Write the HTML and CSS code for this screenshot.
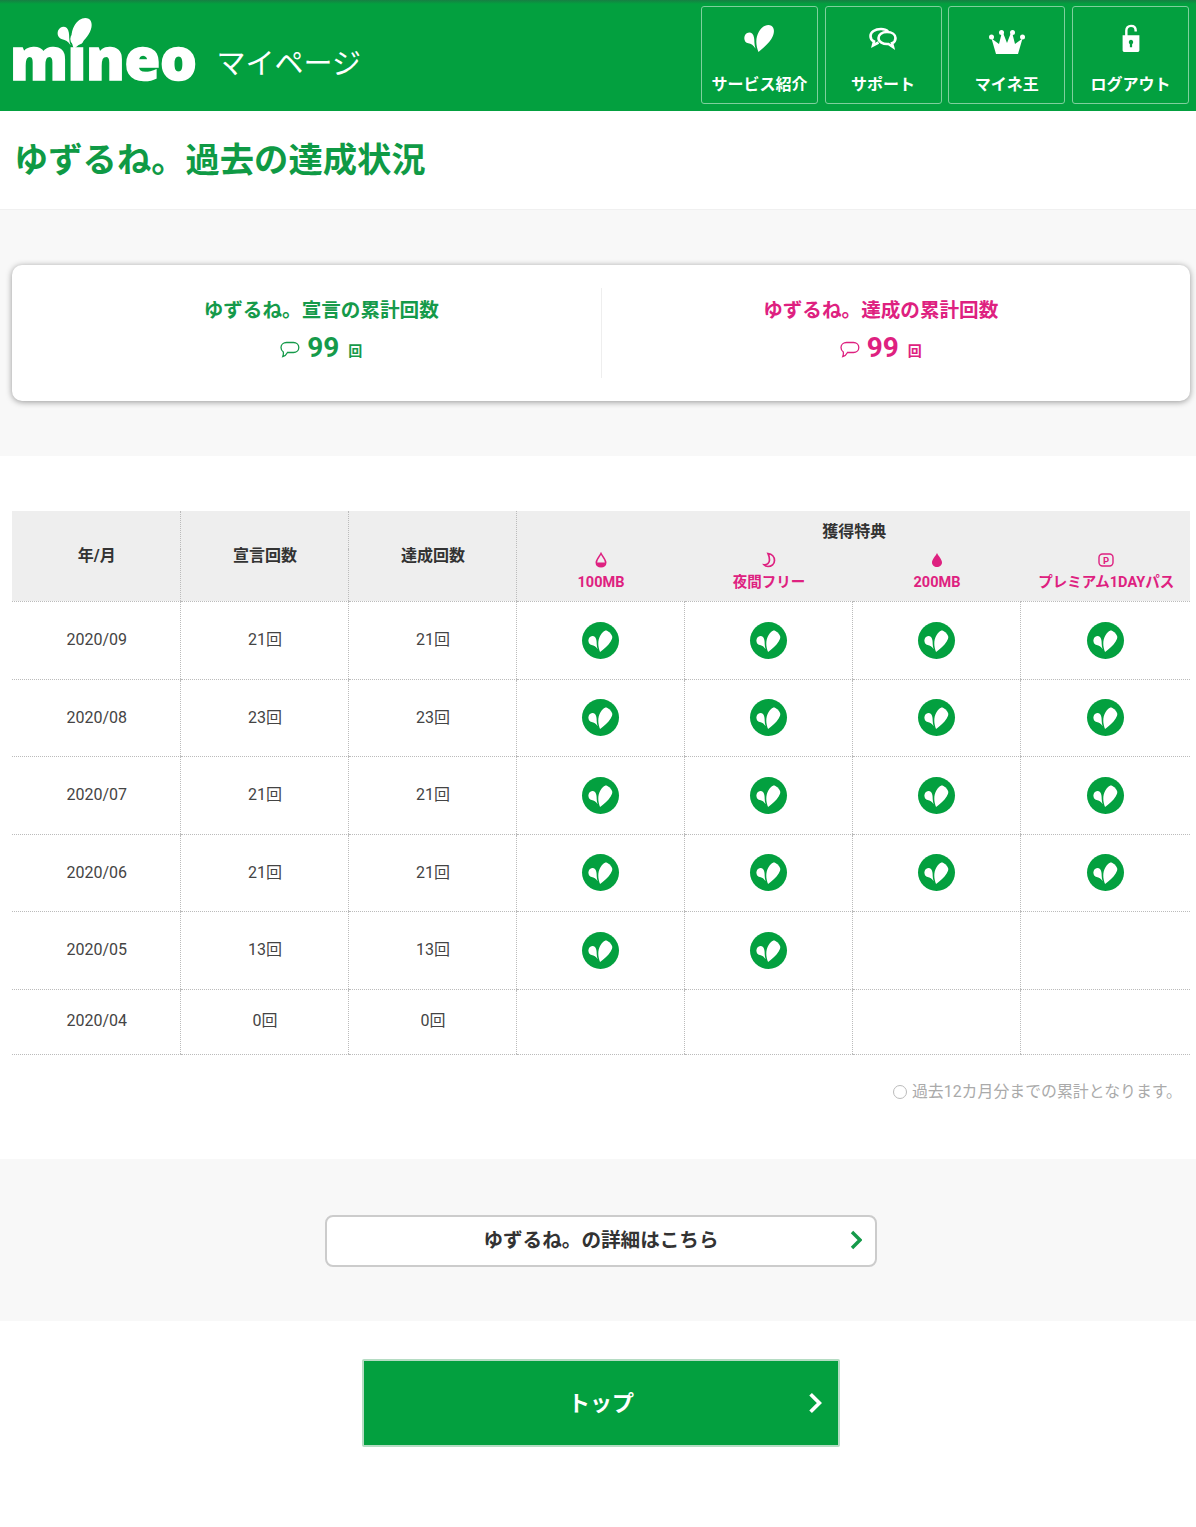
FILE: index.html
```html
<!DOCTYPE html>
<html lang="ja">
<head>
  <meta charset="UTF-8">
  <meta name="viewport" content="width=device-width, initial-scale=1.0">
  <title>ゆずるね。過去の達成状況</title>
  <link rel="stylesheet" href="styles.css">
</head>
<body>
  <svg class="defs" width="0" height="0">
    <symbol id="heart" viewBox="0 0 28 26">
      <path d="M13.500 26C11 20 10.500 13 14 7C16.500 2 22 -0.500 25.500 1.500C29 3.500 28.500 9.500 25.500 14C22.500 19 17 23 13.500 26Z"/>
      <path d="M10.800 23C9 19.800 6.500 18.500 4 18C1 17.500 -0.500 14 0.700 11C2 8 5.500 7 7.800 9C9.500 11 9.700 14 9.700 17C9.700 19 10.200 21 10.800 23Z"/>
    </symbol>
    <symbol id="bubble" viewBox="0 0 20 17">
      <path d="M6.500 1.500H13.500C16.500 1.500 18.800 3.500 18.800 6.500C18.800 9.500 16.500 11.500 13.500 11.500H7.500C6.500 13.500 5 15 2.800 15.500C3.500 14 3.600 12.500 3.300 11C1.800 10 1 8.300 1 6.500C1 3.500 3.500 1.500 6.500 1.500Z" fill="none" stroke="currentColor" stroke-width="1.300"/>
    </symbol>
    <symbol id="chevron" viewBox="0 0 12 20">
      <path d="M2 2L10 10L2 18" fill="none" stroke="currentColor" stroke-width="3.400"/>
    </symbol>
  </svg>

  <header class="site-header">
    <div class="logo">
      <span class="logo-word">mineo</span>
      <svg class="logo-heart"><use href="#heart"/></svg>
      <span class="logo-sub">マイページ</span>
    </div>
    <nav class="site-nav">
      <a href="#">
        <svg class="nav-icon heart-icon"><use href="#heart"/></svg>
        <span>サービス紹介</span>
      </a>
      <a href="#">
        <svg class="nav-icon" viewBox="0 0 30 24" fill="none" stroke="#fff" stroke-width="2.600">
          <path d="M13 3C7 3 2.500 6 2.500 10C2.500 12.500 4 14.500 6 15.500L5 19.500L10.500 16.500"/>
          <path d="M13 3C16 3 18.500 4 20 5.500"/>
          <path d="M19 6C24 6 27.500 8.500 27.500 12C27.500 14.500 26 16.500 24 17.200L25 21L20.500 18C15 18.500 10.500 15.800 10.500 12C10.500 8.500 14 6 19 6Z"/>
        </svg>
        <span>サポート</span>
      </a>
      <a href="#">
        <svg class="nav-icon crown-icon" viewBox="0 0 38 26" fill="#fff">
          <path d="M8 25L3.500 9.500L11 15L13.500 5H15.500L19 14L22.500 5H24.500L27 15L34.500 9.500L30 25Z"/>
          <circle cx="3.500" cy="8" r="2.500"/>
          <circle cx="13.500" cy="3.500" r="2.500"/>
          <circle cx="24.500" cy="3.500" r="2.500"/>
          <circle cx="34.500" cy="8" r="2.500"/>
        </svg>
        <span>マイネ王</span>
      </a>
      <a href="#">
        <svg class="nav-icon" viewBox="0 0 24 30" fill="#fff">
          <path d="M7 13V7C7 4 9 2 12 2C15 2 17 4 17 7V8" fill="none" stroke="#fff" stroke-width="2.600"/>
          <path fill-rule="evenodd" d="M3 12H21V28C21 29 20 30 19 30H5C4 30 3 29 3 28ZM12 17A2.500 2.500 0 0 0 10.800 21.600V25H13.200V21.600A2.500 2.500 0 0 0 12 17Z"/>
        </svg>
        <span>ログアウト</span>
      </a>
    </nav>
  </header>

  <main>
    <h1 class="page-title">ゆずるね。過去の達成状況</h1>

    <section class="summary">
      <div class="summary-card">
        <div class="summary-item green">
          <h2>ゆずるね。宣言の累計回数</h2>
          <p class="count"><svg class="bubble"><use href="#bubble"/></svg><strong>99</strong><small>回</small></p>
        </div>
        <div class="summary-item pink">
          <h2>ゆずるね。達成の累計回数</h2>
          <p class="count"><svg class="bubble"><use href="#bubble"/></svg><strong>99</strong><small>回</small></p>
        </div>
      </div>
    </section>

    <section class="history">
      <table>
        <colgroup>
          <col><col><col><col><col><col><col class="col-last">
        </colgroup>
        <thead>
          <tr class="head-top">
            <th rowspan="2">年/月</th>
            <th rowspan="2">宣言回数</th>
            <th rowspan="2">達成回数</th>
            <th colspan="4" class="perk-title">獲得特典</th>
          </tr>
          <tr class="head-perks">
            <th class="perk">
              <svg class="perk-icon" viewBox="0 0 12 16">
                <path d="M6 1.500C4.500 4.500 1.300 7.500 1.300 10.500C1.300 13 3.300 14.800 6 14.800C8.700 14.800 10.700 13 10.700 10.500C10.700 7.500 7.500 4.500 6 1.500Z" fill="none" stroke="currentColor" stroke-width="1.600"/>
                <path d="M1.500 10.500H10.500C10.500 13 8.700 14.800 6 14.800C3.300 14.800 1.500 13 1.500 10.500Z" fill="currentColor"/>
              </svg>
              <span>100MB</span>
            </th>
            <th class="perk">
              <svg class="perk-icon" viewBox="0 0 14 16">
                <path d="M6 1.500C10 2 12.500 5 12.500 8.500C12.500 12 9.500 14.500 6 14.500C4.500 14.500 3 14 2 12.800C5 13 7.500 11 7.500 8C7.500 5.500 7 3.500 6 1.500Z" fill="none" stroke="currentColor" stroke-width="1.700"/>
              </svg>
              <span>夜間フリー</span>
            </th>
            <th class="perk">
              <svg class="perk-icon" viewBox="0 0 12 16">
                <path d="M6 1C4.500 4.200 1 7.500 1 10.500C1 13.200 3.200 15 6 15C8.800 15 11 13.200 11 10.500C11 7.500 7.500 4.200 6 1Z" fill="currentColor"/>
              </svg>
              <span>200MB</span>
            </th>
            <th class="perk">
              <svg class="perk-icon" viewBox="0 0 16 16">
                <rect x="1" y="2" width="14" height="12" rx="3.500" fill="none" stroke="currentColor" stroke-width="1.400"/>
                <text x="8" y="11.500" text-anchor="middle" font-size="9.500" font-weight="700" fill="currentColor">P</text>
              </svg>
              <span>プレミアム1DAYパス</span>
            </th>
          </tr>
        </thead>
        <tbody>
          <tr>
            <td>2020/09</td><td>21回</td><td>21回</td>
            <td><svg class="got"><use href="#heart"/></svg></td>
            <td><svg class="got"><use href="#heart"/></svg></td>
            <td><svg class="got"><use href="#heart"/></svg></td>
            <td><svg class="got"><use href="#heart"/></svg></td>
          </tr>
          <tr>
            <td>2020/08</td><td>23回</td><td>23回</td>
            <td><svg class="got"><use href="#heart"/></svg></td>
            <td><svg class="got"><use href="#heart"/></svg></td>
            <td><svg class="got"><use href="#heart"/></svg></td>
            <td><svg class="got"><use href="#heart"/></svg></td>
          </tr>
          <tr>
            <td>2020/07</td><td>21回</td><td>21回</td>
            <td><svg class="got"><use href="#heart"/></svg></td>
            <td><svg class="got"><use href="#heart"/></svg></td>
            <td><svg class="got"><use href="#heart"/></svg></td>
            <td><svg class="got"><use href="#heart"/></svg></td>
          </tr>
          <tr>
            <td>2020/06</td><td>21回</td><td>21回</td>
            <td><svg class="got"><use href="#heart"/></svg></td>
            <td><svg class="got"><use href="#heart"/></svg></td>
            <td><svg class="got"><use href="#heart"/></svg></td>
            <td><svg class="got"><use href="#heart"/></svg></td>
          </tr>
          <tr>
            <td>2020/05</td><td>13回</td><td>13回</td>
            <td><svg class="got"><use href="#heart"/></svg></td>
            <td><svg class="got"><use href="#heart"/></svg></td>
            <td></td>
            <td></td>
          </tr>
          <tr class="last-row">
            <td>2020/04</td><td>0回</td><td>0回</td>
            <td></td><td></td><td></td><td></td>
          </tr>
        </tbody>
      </table>
      <p class="note"><i class="note-mark"></i>過去12カ月分までの累計となります。</p>
    </section>

    <section class="detail">
      <a class="detail-btn" href="#">ゆずるね。の詳細はこちら<svg class="chevron"><use href="#chevron"/></svg></a>
    </section>

    <div class="top-wrap">
      <a class="top-btn" href="#">トップ<svg class="chevron"><use href="#chevron"/></svg></a>
    </div>
  </main>
</body>
</html>
```

FILE: styles.css
```css
body {
  margin: 0;
  background: #fff;
  color: #333;
  font-family: Roboto, "Noto Sans CJK JP", sans-serif;
}
.defs { position: absolute; }
a { text-decoration: none; }

.site-header {
  height: 111px;
  background: linear-gradient(#177f43, #03a03f 4px);
  display: flex;
  justify-content: space-between;
  align-items: flex-start;
}
.logo {
  position: relative;
  display: flex;
  align-items: flex-start;
  padding: 22px 0 0 10px;
  color: #fff;
}
.logo-word {
  font-family: "Open Sans", sans-serif;
  font-weight: 800;
  font-size: 58px;
  line-height: 72px;
  letter-spacing: -0.4px;
  -webkit-text-stroke: 1.500px #fff;
}
.logo-heart {
  position: absolute;
  left: 56px;
  top: 17px;
  width: 37px;
  height: 32px;
  fill: #fff;
}
.logo-sub {
  margin: 21px 0 0 20px;
  font-size: 29px;
  line-height: 42px;
  font-weight: 400;
}
.site-nav {
  display: flex;
  gap: 6.700px;
  padding: 6px 7px 0 0;
}
.site-nav a {
  box-sizing: border-box;
  width: 117px;
  height: 98px;
  border: 1px solid #7fcf9d;
  border-radius: 3px;
  color: #fff;
  font-size: 16px;
  line-height: 20px;
  font-weight: 700;
  display: flex;
  flex-direction: column;
  align-items: center;
  padding-top: 17px;
}
.nav-icon { width: 30px; height: 28px; margin-bottom: 23px; }
.crown-icon { width: 38px; margin-top: 4px; margin-bottom: 19px; }
.heart-icon { fill: #fff; }

.page-title {
  margin: 0;
  height: 99px;
  box-sizing: border-box;
  padding: 0 0 0 14px;
  font-size: 34.300px;
  line-height: 99px;
  font-weight: 700;
  color: #0f9a45;
  border-bottom: 1px solid #f0f0f0;
}

.summary {
  background: #f8f8f8;
  padding: 55px 6px 55px 12px;
}
.summary-card {
  height: 136px;
  box-sizing: border-box;
  background: #fff;
  border-radius: 10px;
  box-shadow: 0 1px 6px rgba(0, 0, 0, 0.4);
  display: flex;
  padding: 23px 30px;
}
.summary-item { flex: 1; text-align: center; }
.summary-item + .summary-item { border-left: 1px solid #eee; }
.summary-item h2 {
  margin: 8px 0 0;
  font-size: 19.600px;
  line-height: 30px;
  font-weight: 700;
}
.green { color: #159a4a; }
.pink { color: #de2180; }
.count {
  margin: 3px 0 0;
  height: 36px;
  display: flex;
  justify-content: center;
  align-items: center;
}
.bubble { width: 20px; height: 17px; margin: 4px 7px 0 0; }
.count strong { font-size: 28px; font-weight: 700; }
.count small { font-size: 14px; font-weight: 700; margin: 6px 0 0 9px; }

.history { padding: 55px 6px 0 12px; }
table {
  width: 100%;
  table-layout: fixed;
  border-collapse: collapse;
}
col { width: 168px; }
.col-last { width: 170px; }
th, td {
  padding: 0;
  text-align: center;
  line-height: 20px;
  border-left: 1px dotted #bbb;
  border-bottom: 1px dotted #bbb;
}
th, td:nth-child(-n+3) { padding-left: 2px; }
th:first-child, td:first-child { border-left: 0; }
th {
  background: #eee;
  font-size: 16px;
  font-weight: 700;
}
.head-top { height: 38px; }
.head-perks { height: 52px; }
.perk-title { border-bottom-color: #eee; padding-top: 4px; }
.head-perks th { border-left-color: #eee; }
.head-perks th:first-child { border-left: 1px dotted #bbb; }
.perk {
  color: #de2180;
  font-size: 14.500px;
  vertical-align: top;
}
.perk span { display: block; }
.perk-icon { display: block; width: 16px; height: 16px; margin: 2px auto 5px; }
tbody tr { height: 78px; }
tbody tr:nth-child(even) { height: 77px; }
tbody tr.last-row { height: 65px; }
.last-row td { padding-bottom: 2px; }
td { font-size: 16px; color: #444; }
.got {
  display: block;
  box-sizing: border-box;
  width: 37px;
  height: 37px;
  margin: 0 auto;
  padding: 7px 6px;
  border-radius: 50%;
  background: #03a03f;
  fill: #fff;
}
.note {
  margin: 0;
  height: 104px;
  box-sizing: border-box;
  padding: 27px 8px 0 0;
  display: flex;
  justify-content: flex-end;
  align-items: flex-start;
  font-size: 15.900px;
  line-height: 20px;
  color: #aaa;
}
.note-mark {
  width: 12px;
  height: 12px;
  border: 1px solid #bbb;
  border-radius: 50%;
  margin: 3px 5px 0 0;
}

.detail {
  background: #f8f8f8;
  height: 162px;
  box-sizing: border-box;
  padding-top: 56px;
}
.detail-btn {
  position: relative;
  box-sizing: border-box;
  display: flex;
  justify-content: center;
  align-items: center;
  width: 552px;
  height: 52px;
  margin-left: 325px;
  padding-bottom: 4px;
  background: #fff;
  border: 2px solid #ccc;
  border-radius: 8px;
  color: #333;
  font-size: 19.600px;
  font-weight: 700;
}
.detail-btn .chevron {
  position: absolute;
  right: 13px;
  top: 13px;
  width: 12px;
  height: 20px;
  color: #159a4a;
}
.top-wrap { padding: 38px 0 80px 362px; }
.top-btn {
  position: relative;
  box-sizing: border-box;
  display: flex;
  justify-content: center;
  align-items: center;
  width: 478px;
  height: 88px;
  padding-bottom: 4px;
  background: #03a03f;
  border: 2px solid #b5dcc3;
  border-radius: 2px;
  color: #fff;
  font-size: 22px;
  font-weight: 700;
}
.top-btn .chevron {
  position: absolute;
  right: 16px;
  top: 31px;
  width: 14px;
  height: 22px;
}
```
